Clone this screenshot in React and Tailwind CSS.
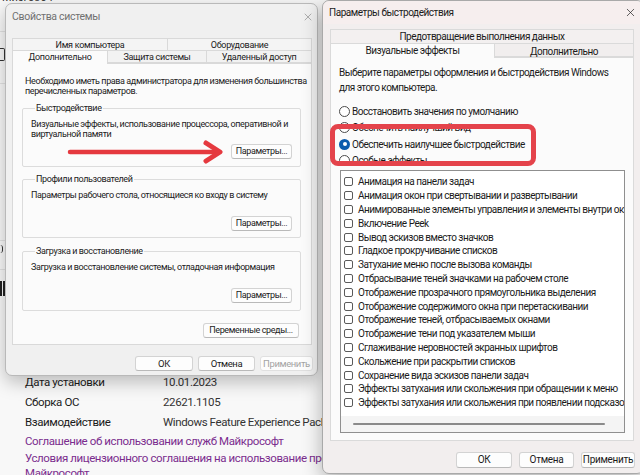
import React from 'react';
import { X } from 'lucide-react';

const effects = [
  'Анимация на панели задач',
  'Анимация окон при свертывании и развертывании',
  'Анимированные элементы управления и элементы внутри окна',
  'Включение Peek',
  'Вывод эскизов вместо значков',
  'Гладкое прокручивание списков',
  'Затухание меню после вызова команды',
  'Отбрасывание теней значками на рабочем столе',
  'Отображение прозрачного прямоугольника выделения',
  'Отображение содержимого окна при перетаскивании',
  'Отображение теней, отбрасываемых окнами',
  'Отображение тени под указателем мыши',
  'Сглаживание неровностей экранных шрифтов',
  'Скольжение при раскрытии списков',
  'Сохранение вида эскизов панели задач',
  'Эффекты затухания или скольжения при обращении к меню',
  'Эффекты затухания или скольжения при появлении подсказок',
];

const radios = [
  { label: 'Восстановить значения по умолчанию' },
  { label: 'Обеспечить наилучший вид' },
  { label: 'Обеспечить наилучшее быстродействие', checked: true },
  { label: 'Особые эффекты' },
];

const Btn = ({ children, className = '' }) => (
  <button className={`flex items-center justify-center whitespace-nowrap rounded-[3px] border border-[#d3d3d3] border-b-[#b9b9b9] bg-[#fdfdfd] leading-none text-[#1b1b1b] ${className}`}>
    {children}
  </button>
);

const Group = ({ title, children, className = '' }) => (
  <fieldset className={`border border-[#dcdcdc] rounded-[2px] px-[7px] ${className}`}>
    <legend className="ml-[5px] px-[1px] leading-[10px] whitespace-nowrap">{title}</legend>
    {children}
  </fieldset>
);

const SystemProps = () => (
  <div className="absolute left-[5px] top-[3px] w-[313px] h-[373px] rounded-[7px] border border-[#b9b9b9] bg-[#f0f0f0] shadow-[0_6px_18px_rgba(0,0,0,0.25)] flex flex-col">
    <div className="h-[26px] flex items-center justify-between pl-[6px] pr-[3px]">
      <span className="text-[10.5px] tracking-[-0.3px] text-[#707070]">Свойства системы</span>
      <X size={12} strokeWidth={1.2} className="text-[#808080]" />
    </div>
    <div className="mt-[8px] ml-[6px] mr-[5px] text-[9px] tracking-[-0.4px] text-[#1b1b1b]">
      <div className="flex h-[12px] leading-[12px] tracking-[-0.3px]">
        <div className="w-[156px] border border-b-0 border-[#d9d9d9] bg-[#f4f4f4] text-center">Имя компьютера</div>
        <div className="flex-1 border border-b-0 border-l-0 border-[#d9d9d9] bg-[#f4f4f4] text-center">Оборудование</div>
      </div>
      <div className="flex h-[13px] leading-[13px] tracking-[-0.3px]">
        <div className="w-[96px] border border-b-0 border-[#d9d9d9] bg-[#fbfbfb] text-center relative z-10 h-[14px]">Дополнительно</div>
        <div className="w-[99px] border border-l-0 border-[#d9d9d9] bg-[#f2f2f2] text-center">Защита системы</div>
        <div className="flex-1 border border-l-0 border-[#d9d9d9] bg-[#f2f2f2] text-center">Удаленный доступ</div>
      </div>
      <div className="h-[282px] overflow-hidden border border-[#d9d9d9] bg-[#fbfbfb] pt-[12px] pl-[9px] pr-[10px] flex flex-col">
        <p className="pl-[3px] leading-[10px] whitespace-nowrap">
          Необходимо иметь права администратора для изменения большинства<br />перечисленных параметров.
        </p>
        <Group title="Быстродействие" className="mt-[7px] pb-[7px]">
          <p className="pt-[6px] pl-[1px] leading-[10px] whitespace-nowrap">
            Визуальные эффекты, использование процессора, оперативной и<br />виртуальной памяти
          </p>
          <div className="mt-[5px] flex justify-end pr-[1px]">
            <Btn className="w-[61px] h-[15px]">Параметры...</Btn>
          </div>
        </Group>
        <Group title="Профили пользователей" className="mt-[7px] pb-[6px]">
          <p className="pt-[6px] pl-[1px] leading-[10px] whitespace-nowrap">
            Параметры рабочего стола, относящиеся ко входу в систему
          </p>
          <div className="mt-[16px] flex justify-end pr-[1px]">
            <Btn className="w-[61px] h-[15px]">Параметры...</Btn>
          </div>
        </Group>
        <Group title="Загрузка и восстановление" className="mt-[8px] pb-[7px]">
          <p className="pt-[6px] pl-[1px] leading-[10px] whitespace-nowrap">
            Загрузка и восстановление системы, отладочная информация
          </p>
          <div className="mt-[16px] flex justify-end pr-[1px]">
            <Btn className="w-[61px] h-[15px]">Параметры...</Btn>
          </div>
        </Group>
        <div className="mt-[12px] flex justify-end pr-[2px]">
          <Btn className="w-[96px] h-[15px]">Переменные среды...</Btn>
        </div>
      </div>
      <div className="mt-[11px] flex justify-end gap-[5px] -mr-[1px] text-[9.5px]">
        <Btn className="w-[58px] h-[15px]">ОК</Btn>
        <Btn className="w-[57px] h-[15px]">Отмена</Btn>
        <Btn className="w-[53px] h-[15px] text-[#a3a3a3] bg-[#f6f6f6] border-[#e0e0e0] border-b-[#e0e0e0]">Применить</Btn>
      </div>
    </div>
  </div>
);

const PerfOptions = () => (
  <div className="absolute left-[322px] top-0 w-[322px] h-[474px] rounded-[7px] border border-[#a9a9a9] bg-[#f2eeee] shadow-[0_6px_20px_rgba(0,0,0,0.3)] flex flex-col tracking-[-0.5px]">
    <div className="h-[23px] flex items-center justify-between pl-[6px] pr-[6px] bg-[#f6eeee] rounded-t-[7px]">
      <span className="text-[10px] tracking-[-0.45px] text-[#1b1b1b]">Параметры быстродействия</span>
      <X size={13} strokeWidth={1.3} className="text-[#222]" />
    </div>
    <div className="mt-[5px] ml-[7px] mr-[9px] text-[#1b1b1b]">
      <div className="h-[14px] leading-[14px] border border-b-0 border-[#dadada] bg-[#f3f0f0] text-center text-[10px]">
        Предотвращение выполнения данных
      </div>
      <div className="flex h-[14px] leading-[14px] text-[10px]">
        <div className="w-[165px] border border-b-0 border-[#dadada] bg-[#fbfbfb] text-center relative z-10 h-[15px]">Визуальные эффекты</div>
        <div className="flex-1 border border-l-0 border-[#dadada] bg-[#f1eeee] text-center pt-[1px]">Дополнительно</div>
      </div>
      <div className="h-[384px] overflow-hidden border border-[#dadada] bg-[#fbfbfb] pt-[7px] pl-[8px] pr-[8px] flex flex-col text-[10px]">
        <p className="leading-[15px] whitespace-nowrap">
          Выберите параметры оформления и быстродействия Windows<br />для этого компьютера.
        </p>
        <div className="mt-[8px] flex flex-col">
          {radios.map((r) => (
            <div key={r.label} className="h-[16.5px] flex items-center gap-[2px]">
              {r.checked ? (
                <span className="shrink-0 w-[11px] h-[11px] rounded-full bg-[#0b5cad] flex items-center justify-center">
                  <span className="w-[4px] h-[4px] rounded-full bg-white" />
                </span>
              ) : (
                <span className="shrink-0 w-[11px] h-[11px] rounded-full border border-[#4a4a4a] bg-white" />
              )}
              <span className="whitespace-nowrap">{r.label}</span>
            </div>
          ))}
        </div>
        <div className="mt-[1px] ml-[1px] h-[263px] border border-[#8f8f8f] bg-white flex flex-col overflow-hidden">
          <div className="pt-[4px] pl-[3px]">
            {effects.map((e) => (
              <div key={e} className="h-[13.8px] flex items-center gap-[5px] whitespace-nowrap">
                <span className="shrink-0 w-[9px] h-[9px] rounded-[2px] border border-[#5a5a5a] bg-white" />
                <span>{e}</span>
              </div>
            ))}
          </div>
          <div className="mt-auto h-[16px] bg-[#f4f4f4] flex items-center px-[12px]">
            <div className="h-[2px] w-[252px] rounded-full bg-[#8a8a8a]" />
          </div>
        </div>
      </div>
      <div className="mt-[11px] flex justify-end gap-[7px] -mr-[1px] text-[10px] tracking-[-0.3px]">
        <Btn className="w-[56px] h-[16px] border-[#2d5f7c] border-b-[#2d5f7c]">ОК</Btn>
        <Btn className="w-[55px] h-[16px]">Отмена</Btn>
        <Btn className="w-[54px] h-[16px]">Применить</Btn>
      </div>
    </div>
  </div>
);

export default function App() {
  return (
    <div className="relative w-[640px] h-[475px] overflow-hidden bg-[#f8f8f8] font-['Roboto',sans-serif] text-[#1b1b1b]">
      <div className="h-[373px] flex flex-col">
        <span className="-mt-[8px] pl-[2px] text-[11px] text-[#333] leading-[12px]">Мизго304</span>
        <div className="w-[5px] flex flex-col">
          <div className="mt-[27px] h-[1px] bg-[#e2e2e2]" />
          <div className="mt-[16px] h-[13px] rounded-r-[2px] border-r-[1.5px] border-y-[1.5px] border-[#333]" />
          <div className="mt-[22px] h-[1px] bg-[#e2e2e2]" />
          <div className="mt-[156px] h-[1px] bg-[#e2e2e2]" />
          <div className="mt-[4px] h-[8px] w-[3px] rounded-r-full border-r-[1.5px] border-[#333]" />
          <div className="mt-[16px] h-[1px] bg-[#e2e2e2]" />
          <div className="mt-[11px] h-[15px] flex gap-[1px]">
            <div className="w-[2px] bg-[#222]" />
            <div className="w-[2px] bg-[#222]" />
          </div>
        </div>
      </div>
      <div className="pl-[25px] text-[11.5px] tracking-[-0.4px]">
        <div className="h-[20px] flex items-center whitespace-nowrap"><span className="w-[138px]">Дата установки</span><span className="text-[#333]">10.01.2023</span></div>
        <div className="h-[20px] flex items-center whitespace-nowrap"><span className="w-[138px]">Сборка ОС</span><span className="text-[#333]">22621.1105</span></div>
        <div className="h-[20px] flex items-center whitespace-nowrap"><span className="w-[138px]">Взаимодействие</span><span className="text-[#333]">Windows Feature Experience Pack</span></div>
        <div className="h-[18px] flex items-center text-[#7b2d8e] whitespace-nowrap">Соглашение об использовании служб Майкрософт</div>
        <div className="leading-[15px] text-[#7b2d8e] whitespace-nowrap">
          Условия лицензионного соглашения на использование программного обеспечения<br />Майкрософт
        </div>
      </div>

      <SystemProps />
      <PerfOptions />

      <svg className="absolute left-[66px] top-[139px]" width="162" height="26" viewBox="0 0 162 26">
        <path d="M4 13 H150" stroke="#e5393f" strokeWidth="4.5" strokeLinecap="round" fill="none" />
        <path d="M140 4 L154 13 L140 22" stroke="#e5393f" strokeWidth="5" strokeLinecap="round" strokeLinejoin="round" fill="none" />
      </svg>
      <div className="absolute left-[330px] top-[124px] w-[206px] h-[42px] rounded-[8px] border-[5px] border-[#e4434b]" />
    </div>
  );
}
